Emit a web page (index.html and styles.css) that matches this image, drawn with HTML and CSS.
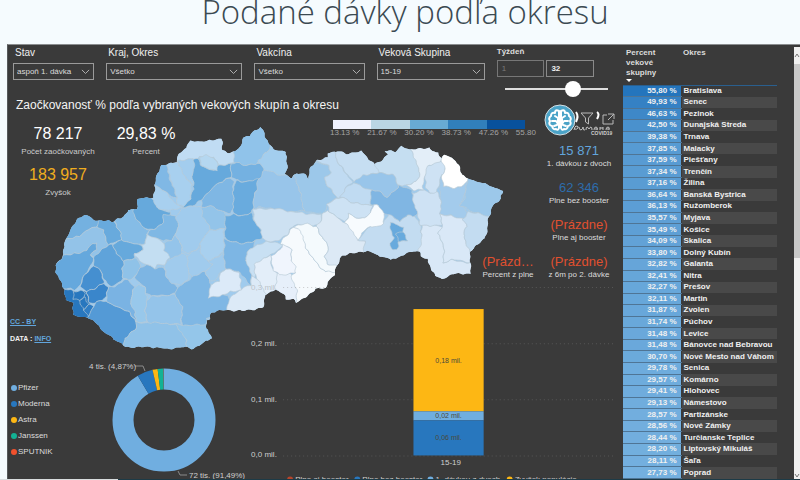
FILE: index.html
```html
<!DOCTYPE html>
<html lang="sk">
<head>
<meta charset="utf-8">
<title>Podané dávky podľa okresu</title>
<link rel="stylesheet" href="styles.css">
</head>
<body>
<h1 class="title">Podané dávky podľa okresu</h1>
<main class="dashboard">
  <section class="main">
    <form class="filters">
      <div class="field">
        <label for="stav">Stav</label>
        <span class="pick"><select id="stav"><option>aspoň 1. dávka</option></select><svg viewBox="0 0 10 6"><path d="M1 1l4 4 4-4"/></svg></span>
      </div>
      <div class="field">
        <label for="kraj">Kraj, Okres</label>
        <span class="pick"><select id="kraj"><option>Všetko</option></select><svg viewBox="0 0 10 6"><path d="M1 1l4 4 4-4"/></svg></span>
      </div>
      <div class="field">
        <label for="vakcina">Vakcína</label>
        <span class="pick"><select id="vakcina"><option>Všetko</option></select><svg viewBox="0 0 10 6"><path d="M1 1l4 4 4-4"/></svg></span>
      </div>
      <div class="field">
        <label for="vek">Veková Skupina</label>
        <span class="pick"><select id="vek"><option>15-19</option></select><svg viewBox="0 0 10 6"><path d="M1 1l4 4 4-4"/></svg></span>
      </div>
      <div class="field week">
        <label for="do">Týždeň</label>
        <div class="range-boxes">
          <input type="text" class="dim" aria-label="Od" value="1" disabled>
          <input type="text" id="do" value="32">
        </div>
        <input type="range" aria-label="Týždeň" min="1" max="46" value="32">
      </div>
    </form>

    <div class="stage">
      <svg class="map" id="map" viewBox="21 -42 1824 1152" role="img" aria-label="Mapa okresov"></svg>
      <div class="left">
        <h2>Zaočkovanosť % podľa vybraných vekových skupín a okresu</h2>
        <div class="kpis">
          <div class="kpi big"><b>78 217</b><span>Počet zaočkovaných</span></div>
          <div class="kpi big"><b>29,83 %</b><span>Percent</span></div>
          <div class="kpi big gold"><b>183 957</b><span>Zvyšok</span></div>
        </div>
        <div class="links">
          <p><a href="#cc">CC - BY</a></p>
          <p>DATA : <a href="#info">INFO</a></p>
        </div>
        <div class="share">
          <ul class="brands">
            <li class="c-sky">Pfizer</li>
            <li class="c-blue">Moderna</li>
            <li class="c-gold">Astra</li>
            <li class="c-green">Janssen</li>
            <li class="c-red">SPUTNIK</li>
          </ul>
          <svg class="donut" viewBox="84 360 160 119">
            <g fill="none" stroke-width="21" transform="rotate(-90 164 420)">
              <circle cx="164" cy="420" r="41" pathLength="100" stroke="#70aee0" stroke-dasharray="91.5 8.5"/>
              <circle cx="164" cy="420" r="41" pathLength="100" stroke="#2877be" stroke-dasharray="4.9 95.1" stroke-dashoffset="-91.5"/>
              <circle cx="164" cy="420" r="41" pathLength="100" stroke="#fdb714" stroke-dasharray="1.6 98.4" stroke-dashoffset="-96.4"/>
              <circle cx="164" cy="420" r="41" pathLength="100" stroke="#12b294" stroke-dasharray="1.8 98.2" stroke-dashoffset="-98"/>
              <circle cx="164" cy="420" r="41" pathLength="100" stroke="#8f8484" stroke-dasharray=".2 99.8" stroke-dashoffset="-99.8"/>
            </g>
            <path class="leader" d="M135 366h8l2 5M178 471l2 4h7"/>
            <text x="89" y="369">4 tis. (4,87%)</text>
            <text x="189" y="478">72 tis. (91,49%)</text>
          </svg>
        </div>
      </div>

      <div class="right">
        <div class="top">
          <div class="scale">
            <div class="ramp"><i></i><i></i><i></i><i></i><i></i></div>
            <div class="ticks"><span>13.13 %</span><span>21.67 %</span><span>30.20 %</span><span>38.73 %</span><span>47.26 %</span><span>55.80</span></div>
          </div>
          <div class="side">
            <svg class="logo" viewBox="543 102 74 36">
              <path d="M577 112q3 4 0 10M598 112q3 2 0 7" fill="none" stroke="#fff" stroke-width="2"/>
              <circle cx="561" cy="120" r="15" fill="#4ba3c7" stroke="#d5dfe4"/>
              <g fill="none" stroke="#fff" stroke-width="2" stroke-linecap="round" stroke-linejoin="round">
                <path d="M560 111q-4-2-4 2-4-1-4 3-3 2-1 5-2 4 2 5 1 4 4 3 2 2 3-1zM562 111q4-2 4 2 4-1 4 3 3 2 1 5 2 4-2 5-1 4-4 3-2 2-3-1z"/>
                <path d="M556 116l3 2v4M553 121h4l2 3M555 126l3-1M566 116l-3 2v4M569 121h-4l-2 3M567 126l-3-1"/>
              </g>
              <path d="M582 113h12l-4.500 5v6l-3-2v-4z" fill="none" stroke="#b9b9b9"/>
              <path d="M608 115h-4v9h10v-4M609 114h6v5M615 114l-6 6" fill="none" stroke="#b9b9b9"/>
              <path d="M575 130q1-4 2-4 3 0 2 2-2 2-3 1M580 127q0 3 2 3 2-1 2-3 0 4 2 3M587 130q0-3 1-3t2 2q1-2 2-2t1 3M595 130q0-3 2-3t1 3M596 129h3M601 127v3M604 127v3M601 128h3M607 130q0-3 2-3t1 3M608 129h2" fill="none" stroke="#c4c4c4" stroke-width="1"/>
              <text x="592" y="135" class="tiny">COVID19</text>
            </svg>
            <div class="pairs">
              <div class="kpi sky"><b>15 871</b><span>1. dávkou z dvoch</span></div>
              <div class="kpi blue"><b>62 346</b><span>Plne bez booster</span></div>
              <div class="kpi red"><b>(Prázdne)</b><span>Plne aj booster</span></div>
              <div class="kpi red first"><b>(Prázd…</b><span>Percent z plne</span></div>
              <div class="kpi red"><b>(Prázdne)</b><span>z 6m po 2. dávke</span></div>
            </div>
          </div>
        </div>
        <svg class="bars" viewBox="240 284 375 195">
          <path class="grid" d="M283 287.500H613M283 343.500H613M283 399.500H613M283 455.500H613"/>
          <text x="251" y="290" class="faint">0,3 mil.</text>
          <text x="251" y="346">0,2 mil.</text>
          <text x="251" y="402">0,1 mil.</text>
          <text x="251" y="457">0,0 mil.</text>
          <rect x="413" y="309" width="70" height="102" fill="#fdb714"/>
          <rect x="413" y="411" width="70" height="9" fill="#70aee0"/>
          <rect x="413" y="420" width="70" height="35" fill="#2877be"/>
          <g class="inbar">
            <text x="448" y="363">0,18 mil.</text>
            <text x="448" y="418">0,02 mil.</text>
            <text x="448" y="440">0,06 mil.</text>
          </g>
          <text x="440" y="465">15-19</text>
          <circle cx="290" cy="479" r="3" fill="#b5452b"/><text x="295" y="481">Plne aj booster</text>
          <circle cx="357" cy="479" r="3" fill="#2877be"/><text x="362" y="481">Plne bez booster</text>
          <circle cx="430" cy="479" r="3" fill="#70aee0"/><text x="435" y="481">1. dávkou z dvoch</text>
          <circle cx="509" cy="479" r="3" fill="#fdb714"/><text x="514" y="481">Zvyšok populácie</text>
        </svg>
      </div>
    </div>
  </section>

  <section class="list">
    <table>
      <thead><tr><th>Percent vekové skupiny<i class="sort"></i></th><th>Okres</th></tr></thead>
      <tbody>
        <tr style="--t:100%"><td>55,80 %</td><td>Bratislava</td></tr>
        <tr style="--t:79%"><td>49,93 %</td><td>Senec</td></tr>
        <tr style="--t:67%"><td>46,63 %</td><td>Pezinok</td></tr>
        <tr style="--t:53%"><td>42,50 %</td><td>Dunajská Streda</td></tr>
        <tr style="--t:41%"><td>39,38 %</td><td>Trnava</td></tr>
        <tr style="--t:36%"><td>37,85 %</td><td>Malacky</td></tr>
        <tr style="--t:35%"><td>37,59 %</td><td>Piešťany</td></tr>
        <tr style="--t:34%"><td>37,34 %</td><td>Trenčín</td></tr>
        <tr style="--t:34%"><td>37,16 %</td><td>Žilina</td></tr>
        <tr style="--t:32%"><td>36,64 %</td><td>Banská Bystrica</td></tr>
        <tr style="--t:30%"><td>36,13 %</td><td>Ružomberok</td></tr>
        <tr style="--t:28%"><td>35,57 %</td><td>Myjava</td></tr>
        <tr style="--t:28%"><td>35,49 %</td><td>Košice</td></tr>
        <tr style="--t:23%"><td>34,09 %</td><td>Skalica</td></tr>
        <tr style="--t:22%"><td>33,80 %</td><td>Dolný Kubín</td></tr>
        <tr style="--t:18%"><td>32,82 %</td><td>Galanta</td></tr>
        <tr style="--t:17%"><td>32,41 %</td><td>Nitra</td></tr>
        <tr style="--t:16%"><td>32,27 %</td><td>Prešov</td></tr>
        <tr style="--t:16%"><td>32,11 %</td><td>Martin</td></tr>
        <tr style="--t:15%"><td>31,87 %</td><td>Zvolen</td></tr>
        <tr style="--t:14%"><td>31,74 %</td><td>Púchov</td></tr>
        <tr style="--t:13%"><td>31,48 %</td><td>Levice</td></tr>
        <tr style="--t:13%"><td>31,48 %</td><td>Bánovce nad Bebravou</td></tr>
        <tr style="--t:11%"><td>30,70 %</td><td>Nové Mesto nad Váhom</td></tr>
        <tr style="--t:7%"><td>29,78 %</td><td>Senica</td></tr>
        <tr style="--t:7%"><td>29,57 %</td><td>Komárno</td></tr>
        <tr style="--t:6%"><td>29,41 %</td><td>Hlohovec</td></tr>
        <tr style="--t:5%"><td>29,13 %</td><td>Námestovo</td></tr>
        <tr style="--t:3%"><td>28,57 %</td><td>Partizánske</td></tr>
        <tr style="--t:3%"><td>28,56 %</td><td>Nové Zámky</td></tr>
        <tr style="--t:3%"><td>28,44 %</td><td>Turčianske Teplice</td></tr>
        <tr style="--t:2%"><td>28,20 %</td><td>Liptovský Mikuláš</td></tr>
        <tr style="--t:1%"><td>28,11 %</td><td>Šaľa</td></tr>
        <tr style="--t:0%"><td>27,73 %</td><td>Poprad</td></tr>
      </tbody>
    </table>
  </section>
  <div class="scrollbar">
    <svg viewBox="0 0 6 17"><path d="M1 10l2-3 2 3"/></svg>
    <i></i>
    <svg class="down" viewBox="0 0 6 8"><path d="M1 3l2 3 2-3"/></svg>
  </div>
</main>
<footer class="strip"><i></i></footer>
<script src="map.js"></script>
</body>
</html>
```

FILE: styles.css
```css
* { box-sizing: border-box; }
body {
  margin: 0;
  height: 100vh;
  overflow: hidden;
  display: flex;
  flex-direction: column;
  background: #f5fbfe;
  color: #dcdcdc;
  font-family: "Liberation Sans", Arial, sans-serif;
  font-size: 8px;
  line-height: 10px;
}
.title {
  margin: 0;
  height: 44px;
  flex: none;
  padding-left: 10px;
  font: 300 33px/24px "Open Sans", sans-serif;
  color: #3b4a52;
  text-align: center;
}
.dashboard {
  flex: 1;
  min-height: 0;
  overflow: hidden;
  margin-left: 7px;
  display: flex;
  background: #3a3a3a;
  border-top: 1px solid #8a8d8f;
  border-left: 1px solid #56595b;
}
.main { flex: 1; min-width: 0; display: flex; flex-direction: column; }

.filters {
  display: grid;
  grid-template-columns: 81fr 136fr 110fr 108fr 111fr;
  column-gap: 12px;
  height: 51px;
  padding: 3px 8px 0 5px;
}
.field { min-width: 0; }
.field label { display: block; padding-left: 2px; font-size: 10px; line-height: 10px; color: #f0f0f0; }
.pick { display: grid; align-items: center; margin-top: 5px; }
.pick > * { grid-area: 1 / 1; }
.pick select {
  appearance: none;
  width: 100%;
  height: 17px;
  padding: 0 14px 0 3px;
  border: 1px solid #9a9a9a;
  border-radius: 0;
  background: transparent;
  color: #dcdcdc;
  font: inherit;
}
.pick svg { justify-self: end; width: 9px; margin-right: 4px; fill: none; stroke: #bdbdbd; pointer-events: none; }
.field.week label { padding: 0; font-size: 8px; line-height: 8px; font-weight: bold; color: #dcdcdc; }
.range-boxes { display: flex; gap: 2px; padding-right: 14px; margin-top: 4px; }
.range-boxes input {
  flex: 1;
  min-width: 0;
  height: 17px;
  padding: 0 4px;
  border: 1px solid #8a8a8a;
  background: transparent;
  color: #f0f0f0;
  font: bold 8px "Liberation Sans", sans-serif;
}
.range-boxes .dim { color: #7a7a7a; border-color: #777; font-weight: normal; }
.week input[type="range"] {
  appearance: none;
  display: block;
  width: calc(100% - 8px);
  height: 16px;
  margin: 4px 0 0 8px;
  background: linear-gradient(#dedede, #dedede) center / 100% 2px no-repeat;
}
.week input[type="range"]::-webkit-slider-thumb {
  appearance: none;
  width: 16px;
  height: 16px;
  border-radius: 50%;
  background: #fff;
}

.stage {
  flex: 1;
  min-height: 0;
  display: grid;
  grid-template-columns: 232px 1fr;
  grid-template-rows: minmax(0, 1fr);
}
.map { grid-area: 1 / 1 / 2 / 3; width: 100%; }
.left { grid-area: 1 / 1; display: flex; flex-direction: column; }
.right { grid-area: 1 / 2; display: flex; flex-direction: column; }

h2 { margin: 0; padding: 3px 0 0 8px; font-size: 12px; line-height: 12px; font-weight: normal; white-space: nowrap; color: #f4f4f4; }
.kpis { display: grid; grid-template-columns: 100px 76px; row-gap: 5px; margin-top: 12px; }
.kpi { display: flex; flex-direction: column; align-items: center; white-space: nowrap; line-height: 12px; }
.kpi b { font-weight: normal; font-size: 13px; line-height: 14px; }
.kpi span { line-height: 12px; }
.big b { font-size: 16px; line-height: 22px; color: #fff; }
.big span { line-height: 14px; color: #cccccc; }
.kpi.gold b { color: #f0ad1e; }
.kpi.sky b { color: #62a5dc; }
.kpi.blue b { color: #2d6cab; }
.kpi.red b { color: #e0502f; }

.links { margin-top: 117px; padding-left: 2px; font-size: 7px; font-weight: bold; color: #f0f0f0; }
.links p { margin: 0 0 8px; line-height: 9px; }
.links a { color: #62a5dc; }

.share { flex: 1; min-height: 0; display: flex; align-items: flex-end; }
.brands { width: 76px; flex: none; margin: 0 0 19px; padding: 0 0 0 3px; list-style: none; }
.brands li { display: flex; align-items: center; gap: 1px; height: 16px; }
.brands li::before { content: ""; width: 6px; height: 6px; border-radius: 50%; background: var(--c); }
.c-sky { --c: #70aee0; }
.c-blue { --c: #2877be; }
.c-gold { --c: #fdb714; }
.c-green { --c: #12b294; }
.c-red { --c: #f0512d; }
.donut { width: 160px; flex: none; overflow: visible; }
svg text { font-size: 8px; fill: #cfcfcf; }
.leader { fill: none; stroke: #8a8a8a; }

.top { display: flex; flex: none; height: 188px; }
.scale { width: 220px; flex: none; margin: 24px auto 0 93px; }
.ramp { display: flex; width: 192px; height: 9px; }
.ramp i { flex: 1; }
.ramp i:nth-child(1) { background: #eff1fd; }
.ramp i:nth-child(2) { background: #bad5e4; }
.ramp i:nth-child(3) { background: #68aad3; }
.ramp i:nth-child(4) { background: #317fbb; }
.ramp i:nth-child(5) { background: #08519c; }
.ticks { display: flex; margin-left: -3px; line-height: 8px; color: #a4a4a4; }
.ticks span { width: 38px; white-space: nowrap; }
.side { width: 142px; flex: none; margin-left: -92px; }
.logo { display: block; width: 74px; height: 36px; margin: 6px 0 0 auto; }
svg .tiny { font-size: 5px; font-weight: bold; }
.pairs { display: grid; grid-template-columns: 68px 74px; grid-auto-rows: 37px; margin-top: 6px; }
.pairs .kpi { grid-column: 2; }
.pairs .kpi.first { grid-column: 1; }
.bars { display: block; width: 100%; overflow: visible; }
.bars .grid { stroke: rgba(130, 130, 130, .4); stroke-dasharray: 1 3; }
.bars .faint { fill: #bcc4ca; }
.bars .inbar text { font-size: 7px; fill: #4a4a3c; text-anchor: middle; }

.list { width: 154px; flex: none; margin-left: 7px; }
table { width: 100%; height: 100%; border-collapse: collapse; font-weight: bold; color: #f0f0f0; }
th, td { padding: 0; text-align: left; white-space: nowrap; line-height: 10px; }
thead { height: 40px; }
th { vertical-align: top; padding: 3px 0 0 2px; border-bottom: 1px solid #2a5f8e; color: #dcdcdc; }
th:first-child { width: 58px; padding-left: 3px; padding-right: 12px; white-space: normal; }
.sort { display: block; width: 0; margin-top: 1px; border: 3px solid transparent; border-top-color: #fff; border-bottom: 0; }
td:first-child {
  padding-right: 4px;
  text-align: right;
  background: color-mix(in srgb, #2475bd var(--t), #74b0df);
  border-bottom: 1px solid #4f7595;
}
td:last-child { padding-left: 2px; border-left: 1px solid #3a3a3a; }
tbody tr:nth-child(even) td:last-child { background: #494949; }

.scrollbar { width: 6px; flex: none; margin: 2px 0 0 17px; display: flex; flex-direction: column; background: #f0f0f0; }
.scrollbar i { flex: 0 0 194px; background: #c9c9c9; }
.scrollbar svg { flex: none; display: block; width: 6px; fill: none; stroke: #777; }
.scrollbar .down { margin-top: auto; }
.strip { flex: none; height: 1px; background: #1d3b47; }
.strip i { display: block; width: 118px; height: 1px; background: #d8dcde; }
```

FILE: map.js
```js
// Map units are three to a pixel. Borders are subdivided and roughened by a
// position-based field, so neighbouring districts keep a common edge.
const outline = "165,487 168,465 190,432 190,405 198,385 212,357 230,330 252,316 272,322 292,334 325,332 340,334 350,326 372,320 382,298 408,297 412,270 425,263 460,262 464,225 470,190 485,168 528,155 535,132 560,112 568,92 600,97 625,90 664,86 666,120 682,130 705,125 722,108 730,82 750,78 762,62 780,52 790,62 797,90 808,105 822,120 855,125 860,150 862,172 852,195 875,203 890,188 910,192 925,207 930,170 950,150 982,140 983,128 1012,123 1037,132 1080,122 1095,137 1110,150 1125,163 1148,148 1162,132 1152,122 1185,125 1205,107 1230,120 1285,113 1295,125 1315,128 1323,145 1332,133 1355,145 1375,165 1383,195 1398,203 1445,220 1465,222 1485,236 1506,240 1502,268 1480,285 1465,320 1462,350 1455,385 1430,405 1410,425 1410,490 1385,492 1355,492 1325,507 1305,497 1290,470 1282,445 1262,440 1258,428 1240,422 1215,430 1200,440 1170,450 1155,440 1140,440 1125,432 1100,422 1060,430 1027,438 1010,465 1003,492 985,515 975,535 945,537 920,560 888,580 880,567 858,568 850,550 825,540 795,555 788,590 760,598 730,603 675,600 650,605 632,610 630,628 617,632 618,655 635,685 615,692 600,705 575,717 545,710 505,718 470,712 375,711 360,697 340,690 325,672 305,662 290,640 262,622 220,618 218,578 198,570 190,537 180,515";
const districts = [
  ["#74b1e0", "185,390 240,380 260,362 290,350 310,325 250,300 200,320"],
  ["#93c3e8", "180,437 180,405 198,387 240,380 260,362 290,350 310,360 315,385 322,405 300,425 283,445 272,432 288,415 290,400 275,402 262,420 240,430"],
  ["#65a8dd", "150,490 188,435 240,430 262,420 275,402 290,400 288,415 270,432 280,445 270,470 252,495 240,525 225,540 200,535 170,540"],
  ["#68aadd", "300,325 340,325 350,350 365,370 362,392 340,398 322,405 315,385 310,360 290,350"],
  ["#85bce6", "340,315 380,285 410,290 402,320 430,352 450,360 438,375 435,400 415,405 390,398 362,390 365,370 350,350"],
  ["#66a9dc", "400,300 402,255 460,250 470,290 490,305 510,305 510,315 490,320 485,345 460,360 430,352 402,320"],
  ["#66a9dc", "362,390 390,398 425,408 430,420 405,430 402,445 372,452 350,432 338,405"],
  ["#5fa3da", "322,405 338,405 350,432 372,452 365,480 370,505 350,520 330,530 310,510 300,480 280,465 280,445 300,425"],
  ["#458fd0", "280,465 300,480 310,520 280,540 258,545 240,530 252,495"],
  ["#3a86cb", "258,545 280,540 310,520 322,530 320,560 300,572 285,580 265,580 262,560"],
  ["#2877be", "170,535 220,542 258,545 265,580 278,600 260,630 205,630 180,570"],
  ["#2877be", "220,545 240,540 255,552 250,562 236,572 218,568"],
  ["#2877be", "237,572 252,562 264,585 250,602 243,585"],
  ["#2f7dc4", "250,602 264,585 280,588 266,618"],
  ["#549ad6", "285,580 300,572 320,575 350,590 385,605 408,640 405,655 375,685 370,725 240,640 265,615 280,590"],
  ["#7ab3e3", "320,560 322,530 345,530 370,510 385,512 403,530 395,555 390,580 405,600 408,637 385,605 350,590 320,575"],
  ["#8fc2e8", "372,452 402,445 418,455 420,480 403,500 385,512 370,505 365,480"],
  ["#7fb8e4", "460,360 485,345 490,315 510,312 530,325 535,350 525,375 515,390 490,393 470,385 440,378 450,360"],
  ["#94c4ea", "490,400 515,390 525,375 540,400 545,430 535,440 510,445 492,425"],
  ["#7db5e3", "418,475 440,465 460,475 490,470 500,500 535,535 522,550 505,555 475,555 455,560 438,545 435,530 403,505"],
  ["#a0cbed", "490,462 510,445 545,430 560,440 570,485 560,510 540,525 515,520 500,500"],
  ["#c3def2", "435,400 438,375 470,385 490,400 492,420 510,440 490,462 470,465 460,475 440,465 405,440 405,430 430,420 425,405"],
  ["#a0cbed", "525,325 545,295 570,290 605,290 610,315 620,340 630,360 605,385 600,405 580,425 560,430 545,420 540,400 525,375 535,350"],
  ["#98c8eb", "403,530 412,525 435,530 438,555 440,575 435,600 438,635 408,637 405,605 390,580 395,555"],
  ["#94c4ea", "438,575 455,560 505,555 525,555 545,590 545,625 540,645 500,640 440,640 436,605"],
  ["#90c2e8", "365,725 375,685 405,655 408,637 500,640 525,645 550,670 560,700 555,730"],
  ["#94c6ea", "525,645 540,645 620,640 650,690 560,735 558,690"],
  ["#7fb7e4", "522,550 540,525 560,515 575,495 612,482 630,510 628,560 680,555 695,575 680,615 620,625 615,645 545,645 545,590"],
  ["#a0cbed", "560,440 580,425 600,410 610,440 640,460 630,475 612,482 575,500 565,485"],
  ["#a8d0ef", "600,405 605,385 630,360 670,355 672,390 670,425 640,445 620,455 600,430"],
  ["#a0cbed", "620,455 640,445 670,430 675,475 655,490 645,515 630,510 615,485 640,460"],
  ["#93c4e9", "605,290 630,288 670,305 680,320 672,355 650,357 630,360 620,340 605,320"],
  ["#7fb7e4", "605,290 605,270 620,250 645,225 690,203 700,215 698,250 700,300 690,312 670,305 630,288"],
  ["#66a9dc", "578,145 595,148 605,170 640,182 655,165 692,162 692,200 645,225 620,250 605,270 575,290 545,290 570,265 580,240 575,200"],
  ["#c0dcf3", "520,158 525,130 560,80 670,75 680,115 705,120 705,155 690,162 655,165 640,140 600,140 595,148 560,148"],
  ["#b5d7f0", "598,142 620,135 640,142 655,165 650,180 630,178 605,168"],
  ["#a8d0ef", "495,160 530,155 560,210 575,225 570,265 550,288 530,285 525,250 515,215"],
  ["#a3cdee", "530,152 578,145 582,175 575,200 580,225 560,210 545,185"],
  ["#80b8e5", "460,190 485,155 498,165 510,210 522,235 528,265 500,250 480,235 460,225"],
  ["#a8d0ef", "455,262 460,220 500,250 530,285 545,292 510,300 485,302 470,290"],
  ["#90c3ea", "700,158 700,100 780,40 815,105 800,125 775,155 770,163 740,165"],
  ["#74b1e1", "705,158 740,165 785,162 795,178 780,210 740,215 705,210 692,200 692,165"],
  ["#a3ceee", "810,105 870,115 880,210 850,200 830,198 795,185 785,165 772,155 800,125"],
  ["#69abde", "705,212 740,215 775,208 775,230 765,245 758,290 755,310 730,318 700,310 698,250"],
  ["#98c5ea", "775,208 795,180 850,198 885,195 890,225 905,265 912,303 860,305 820,295 780,292 758,298 760,270"],
  ["#9cc8ea", "880,185 925,187 928,150 985,168 990,190 975,205 975,222 992,240 1010,262 980,285 970,313 912,303 900,250 888,220"],
  ["#69abde", "675,320 700,312 730,318 755,310 765,340 783,360 785,385 760,395 730,400 690,395 673,380"],
  ["#cde1f2", "758,298 820,295 870,305 965,315 955,345 880,345 860,375 830,395 800,393 783,385 783,360 765,340 760,310"],
  ["#7db6e4", "673,385 690,395 730,400 765,395 760,410 740,425 735,455 750,470 755,500 750,525 735,510 715,485 675,475 670,430"],
  ["#c8e0f3", "760,410 800,393 830,400 845,402 835,420 800,440 790,445 762,465 765,510 750,525 755,500 745,470 735,455 740,425"],
  ["#dceaf7", "675,615 690,560 710,545 730,530 750,525 755,500 775,505 790,530 800,545 795,610"],
  ["#dceaf8", "625,562 630,525 655,515 660,490 675,475 715,487 723,510 720,540 690,545 660,560"],
  ["#e6effa", "825,490 870,490 892,545 888,590 840,570 825,540"],
  ["#e3eef9", "762,462 790,445 812,435 815,470 830,490 825,540 800,555 775,510 762,490"],
  ["#f6fafd", "840,400 880,350 905,365 920,420 950,460 975,485 1013,480 1010,520 940,570 888,595 890,545 870,500 885,488 870,450 875,420"],
  ["#f0f5fd", "812,440 840,420 845,400 875,420 870,450 885,470 885,488 840,495 820,480"],
  ["#f4fafd", "880,350 920,342 950,350 960,375 985,410 975,440 985,463 1020,463 1013,485 975,485 950,460 920,420 900,365"],
  ["#dce9f5", "950,350 970,310 980,302 1010,320 1035,340 1060,360 1070,385 1093,395 1095,432 1060,445 1015,470 985,463 975,440 985,410 960,375"],
  ["#c0dbf2", "945,150 985,115 1003,115 1008,155 1055,215 1035,235 1020,265 1010,262 992,240 975,222 975,205 990,190 985,168"],
  ["#c6def2", "1003,115 1080,110 1125,155 1140,165 1140,190 1110,192 1085,200 1060,215 1030,180 1008,155"],
  ["#c0dbf2", "1060,217 1075,225 1115,240 1112,270 1115,285 1060,280 1030,265 1020,262 1035,235"],
  ["#cde2f4", "980,285 1010,265 1030,265 1060,280 1115,285 1110,310 1090,325 1070,325 1045,310 1035,335 1010,320 985,305"],
  ["#c3dcf1", "1072,388 1110,350 1150,340 1165,310 1200,335 1220,315 1245,318 1262,345 1265,400 1262,450 1150,465 1090,435 1093,395"],
  ["#c5def1", "1125,165 1140,105 1205,95 1235,125 1250,155 1258,190 1250,215 1220,228 1190,225 1180,195 1140,190"],
  ["#80b6e3", "1112,240 1140,245 1160,262 1193,235 1190,225 1235,240 1240,270 1250,310 1240,320 1220,315 1200,335 1180,320 1150,310 1135,288 1112,282"],
  ["#98c5ea", "1060,215 1085,195 1110,192 1140,190 1180,193 1193,235 1160,262 1140,245 1110,240 1075,225"],
  ["#f7fbfe", "1035,340 1045,310 1070,325 1090,325 1110,310 1120,285 1135,288 1153,310 1150,340 1130,350 1110,350 1085,370 1072,388 1055,360"],
  ["#e3eef8", "1228,110 1290,103 1330,125 1325,150 1310,165 1285,165 1275,200 1265,225 1272,240 1240,240 1220,228 1250,215 1258,190 1250,160"],
  ["#cee2f4", "1280,168 1310,160 1330,150 1335,175 1325,200 1315,225 1310,250 1290,250 1275,235 1275,200"],
  ["#cee2f4", "1238,250 1272,240 1290,250 1312,245 1322,270 1322,310 1325,345 1300,350 1260,345 1250,310 1240,280"],
  ["#a3cbec", "1325,195 1330,228 1360,235 1390,225 1405,195 1395,250 1380,280 1405,310 1385,328 1345,315 1320,312 1322,260 1315,225"],
  ["#9cc8ea", "1402,190 1520,230 1510,270 1475,325 1440,312 1405,300 1380,285 1395,260"],
  ["#ffffff", "1322,150 1332,120 1400,160 1403,205 1390,225 1360,235 1330,228 1325,200 1335,175"],
  ["#d9e8f7", "1265,345 1325,350 1315,370 1330,410 1330,460 1350,450 1420,460 1420,500 1320,520 1245,450 1262,400"],
  ["#d9e8f7", "1322,312 1385,325 1400,350 1390,370 1395,400 1420,415 1420,460 1370,450 1350,450 1330,460 1330,410 1315,370 1325,345"],
  ["#c3dcf1", "1385,328 1405,305 1440,312 1475,320 1470,395 1412,430 1395,400 1390,370 1400,350"],
  ["#68aadd", "1170,335 1185,345 1210,350 1208,368 1220,390 1195,395 1190,420 1175,415 1170,400 1180,385 1172,360"],
  ["#68aadd", "1188,370 1208,366 1220,390 1197,394"]
];
const shift = (x, y) => [
  x - 2 + 1.6 * Math.sin(y / 4.1 + x / 9.3) + 1.4 * Math.sin(y / 9.7 - x / 6.9),
  y + 1.6 * Math.sin(x / 4.7 - y / 10.1) + 1.4 * Math.sin(x / 10.9 + y / 7.3)
];
function rough(list) {
  const pts = list.split(" ").map(p => p.split(",").map(Number));
  const out = [];
  pts.forEach(([ax, ay], i) => {
    const [bx, by] = pts[(i + 1) % pts.length];
    const n = Math.max(1, Math.round(Math.hypot(bx - ax, by - ay) / 5));
    for (let k = 0; k < n; k++) {
      out.push(shift(ax + (bx - ax) * k / n, ay + (by - ay) * k / n).map(v => v.toFixed(1)).join());
    }
  });
  return out.join(" ");
}
const edge = rough(outline);
document.getElementById("map").innerHTML =
  `<clipPath id="land"><polygon points="${edge}"/></clipPath>` +
  `<g clip-path="url(#land)" stroke="#b9cbd8" stroke-width="2" stroke-linejoin="round">` +
  `<polygon points="${edge}" fill="#a0cbed"/>` +
  districts.map(([c, p]) => `<polygon points="${rough(p)}" fill="${c}"/>`).join("") +
  `</g>`;
```
